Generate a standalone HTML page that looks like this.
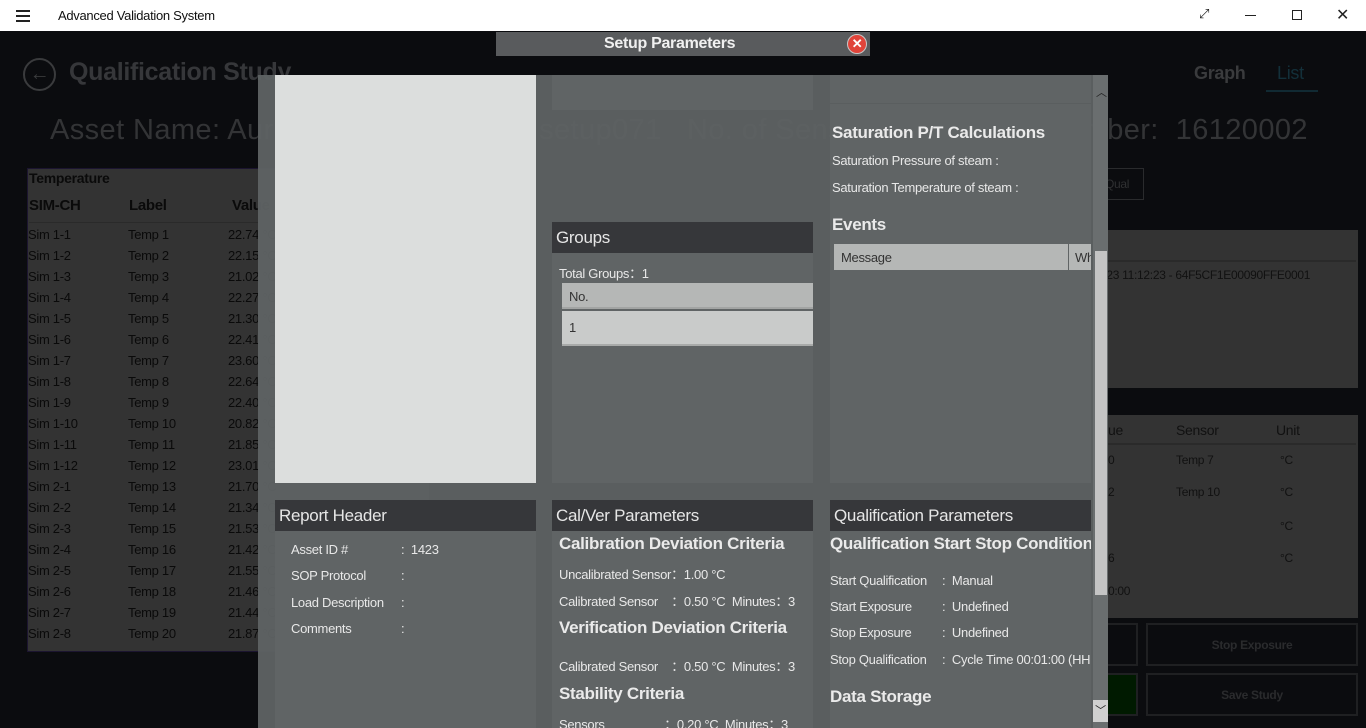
<!DOCTYPE html>
<html><head><meta charset="utf-8"><style>
*{margin:0;padding:0;box-sizing:border-box}
html,body{width:1366px;height:728px;overflow:hidden}
body{background:#0b0c0f;font-family:"Liberation Sans",sans-serif;position:relative;letter-spacing:-0.3px}
.a{position:absolute;white-space:nowrap}
.tb{left:0;top:0;width:1366px;height:31px;background:#fff}
.rowt{color:#0a0a0a;font-size:13px}
.hd{background:#36373a;color:#e6e6e6;font-size:17px;padding-left:4px;line-height:31px}
.pn{background:#606465}
.lt{color:#e8e8e8;font-size:13px}
.h2{color:#eaeaea;font-size:17px;font-weight:bold}
</style></head><body>
<div class="a tb"></div>
<div class="a" style="left:16px;top:10px;width:14px;height:2px;background:#222;box-shadow:0 5px 0 #222,0 10px 0 #222"></div>
<div class="a" style="left:58px;top:8px;font-size:13px;color:#111">Advanced Validation System</div>
<div class="a" style="left:1199px;top:6px;font-size:13px;color:#222">⤢</div>
<div class="a" style="left:1245px;top:15px;width:11px;height:1px;background:#222"></div>
<div class="a" style="left:1292px;top:10px;width:10px;height:10px;border:1px solid #222"></div>
<div class="a" style="left:1336px;top:5px;font-size:16px;color:#222">✕</div>

<!-- background page -->
<div class="a" style="left:23px;top:58px;width:33px;height:33px;border:2px solid #3a3b3d;border-radius:50%;color:#3a3b3d;font-size:20px;text-align:center;line-height:28px;font-weight:bold">←</div>
<div class="a" style="left:69px;top:58px;font-size:25px;font-weight:bold;color:#36373a">Qualification Study</div>
<div class="a" style="left:50px;top:114px;font-size:29px;letter-spacing:0.4px;color:#333436">Asset Name: Auro71 &nbsp; Setup Name : setup071 &nbsp; No. of Sensors: 20 &nbsp; Serial Number: &nbsp;16120002</div>
<div class="a" style="left:1194px;top:63px;font-size:18px;font-weight:bold;color:#3a3b3d">Graph</div>
<div class="a" style="left:1277px;top:63px;font-size:18px;color:#13303a">List</div>
<div class="a" style="left:1266px;top:90px;width:52px;height:2px;background:#112a33"></div>
<div class="a" style="left:1096px;top:168px;width:48px;height:32px;border:1px solid #2a2b2d;color:#2f3032;font-size:12px;padding:8px 0 0 8px">Qual</div>
<div class="a" style="left:1098px;top:230px;width:260px;height:158px;background:#333"></div>
<div class="a" style="left:1098px;top:260px;width:258px;height:2px;background:#2a2a2a"></div>
<div class="a" style="left:1100px;top:268px;font-size:12px;color:#111">023 11:12:23 - 64F5CF1E00090FFE0001</div>
<div class="a" style="left:1098px;top:415px;width:260px;height:203px;background:#333"></div>
<div class="a" style="left:1098px;top:443px;width:258px;height:2px;background:#2a2a2a"></div>
<div class="a" style="left:1108px;top:422px;font-size:14px;color:#111">ue</div>
<div class="a" style="left:1176px;top:422px;font-size:14px;color:#111">Sensor</div>
<div class="a" style="left:1276px;top:422px;font-size:14px;color:#111">Unit</div>
<div class="a" style="left:1108px;top:453px;font-size:12px;color:#111">0</div><div class="a" style="left:1176px;top:453px;font-size:12px;color:#111">Temp 7</div><div class="a" style="left:1280px;top:453px;font-size:12px;color:#111">°C</div>
<div class="a" style="left:1108px;top:485px;font-size:12px;color:#111">2</div><div class="a" style="left:1176px;top:485px;font-size:12px;color:#111">Temp 10</div><div class="a" style="left:1280px;top:485px;font-size:12px;color:#111">°C</div>
<div class="a" style="left:1280px;top:519px;font-size:12px;color:#111">°C</div>
<div class="a" style="left:1108px;top:551px;font-size:12px;color:#111">6</div><div class="a" style="left:1280px;top:551px;font-size:12px;color:#111">°C</div>
<div class="a" style="left:1108px;top:584px;font-size:12px;color:#111">0:00</div>
<div class="a" style="left:1098px;top:623px;width:40px;height:43px;border:2px solid #1f2022"></div>
<div class="a" style="left:1146px;top:623px;width:212px;height:43px;border:2px solid #1f2022;color:#2a2b2d;font-size:12px;font-weight:bold;text-align:center;line-height:40px">Stop Exposure</div>
<div class="a" style="left:1098px;top:673px;width:40px;height:43px;border:2px solid #1f2022;background:#001a00"></div>
<div class="a" style="left:1146px;top:673px;width:212px;height:43px;border:2px solid #1f2022;color:#2a2b2d;font-size:12px;font-weight:bold;text-align:center;line-height:40px">Save Study</div>

<!-- left table -->
<div class="a" style="left:27px;top:168px;width:402px;height:484px;background:#333;border-left:1px solid #1c1530;border-top:1px solid #1c1530;border-bottom:1px solid #1c1530"></div>
<div class="a rowt" style="left:29px;top:170px;font-weight:bold;font-size:14px">Temperature</div>
<div class="a rowt" style="left:29px;top:197px;font-weight:bold;font-size:15px">SIM-CH</div>
<div class="a rowt" style="left:129px;top:197px;font-weight:bold;font-size:15px">Label</div>
<div class="a rowt" style="left:232px;top:197px;font-weight:bold;font-size:15px">Value</div>
<div class="a" style="left:29px;top:222px;width:399px;height:1px;background:#2a2a2a"></div>
<div id="rows"></div>

<!-- modal -->
<div class="a" style="left:496px;top:32px;width:374px;height:24px;background:#595b5d"></div>
<div class="a" style="left:604px;top:35px;font-size:16px;font-weight:bold;color:#f0f0f0">Setup Parameters</div>
<div class="a" style="left:847px;top:34px;width:20px;height:20px;border-radius:50%;background:#e0443a;border:1px solid #c8c8c8;color:#fff;font-size:13px;text-align:center;line-height:18px;font-weight:bold">✕</div>
<div class="a" style="left:258px;top:75px;width:850px;height:653px;background:rgba(95,99,100,0.95)"></div>
<!-- col1 -->
<div class="a" style="left:275px;top:75px;width:261px;height:408px;background:#dcdedd"></div>
<div class="a hd" style="left:275px;top:500px;width:261px;height:31px">Report Header</div>
<div class="a pn" style="left:275px;top:531px;width:261px;height:197px"></div>
<div class="a lt" style="left:291px;top:542px">Asset ID #</div><div class="a lt" style="left:401px;top:542px">:&nbsp; 1423</div>
<div class="a lt" style="left:291px;top:568px">SOP Protocol</div><div class="a lt" style="left:401px;top:568px">:</div>
<div class="a lt" style="left:291px;top:595px">Load Description</div><div class="a lt" style="left:401px;top:595px">:</div>
<div class="a lt" style="left:291px;top:621px">Comments</div><div class="a lt" style="left:401px;top:621px">:</div>
<!-- col2 -->
<div class="a pn" style="left:552px;top:75px;width:261px;height:35px"></div>
<div class="a hd" style="left:552px;top:222px;width:261px;height:31px">Groups</div>
<div class="a pn" style="left:552px;top:253px;width:261px;height:230px"></div>
<div class="a lt" style="left:559px;top:263px">Total Groups：1</div>
<div class="a" style="left:562px;top:283px;width:251px;height:26px;background:#b5b7b6;border-bottom:2px solid #a2a4a3;color:#333;font-size:13px;padding:6px 7px">No.</div>
<div class="a" style="left:562px;top:311px;width:251px;height:35px;background:#c9cbca;border-bottom:2px solid #a8aaa9;color:#333;font-size:13px;padding:9px 7px">1</div>
<div class="a hd" style="left:552px;top:500px;width:261px;height:31px">Cal/Ver Parameters</div>
<div class="a pn" style="left:552px;top:531px;width:261px;height:197px"></div>
<div class="a h2" style="left:559px;top:534px">Calibration Deviation Criteria</div>
<div class="a lt" style="left:559px;top:564px">Uncalibrated Sensor：1.00 °C</div>
<div class="a lt" style="left:559px;top:591px">Calibrated Sensor &nbsp;&nbsp;&nbsp;：0.50 °C &nbsp;Minutes：3</div>
<div class="a h2" style="left:559px;top:618px">Verification Deviation Criteria</div>
<div class="a lt" style="left:559px;top:656px">Calibrated Sensor &nbsp;&nbsp;&nbsp;：0.50 °C &nbsp;Minutes：3</div>
<div class="a h2" style="left:559px;top:684px">Stability Criteria</div>
<div class="a lt" style="left:559px;top:714px">Sensors &nbsp;&nbsp;&nbsp;&nbsp;&nbsp;&nbsp;&nbsp;&nbsp;&nbsp;&nbsp;&nbsp;&nbsp;&nbsp;&nbsp;&nbsp;&nbsp;&nbsp;：0.20 °C &nbsp;Minutes：3</div>
<!-- col3 -->
<div class="a pn" style="left:830px;top:75px;width:261px;height:408px"></div>
<div class="a" style="left:830px;top:103px;width:261px;height:1px;background:#5a5e5f"></div>
<div class="a h2" style="left:832px;top:123px">Saturation P/T Calculations</div>
<div class="a lt" style="left:832px;top:153px">Saturation Pressure of steam :</div>
<div class="a lt" style="left:832px;top:180px">Saturation Temperature of steam :</div>
<div class="a h2" style="left:832px;top:215px">Events</div>
<div class="a" style="left:834px;top:244px;width:234px;height:26px;background:#b5b7b6;color:#333;font-size:13px;padding:6px 7px">Message</div>
<div class="a" style="left:1069px;top:244px;width:22px;height:26px;background:#b5b7b6;color:#333;font-size:13px;padding:6px 6px;overflow:hidden">Wh</div>
<div class="a hd" style="left:830px;top:500px;width:261px;height:31px">Qualification Parameters</div>
<div class="a pn" style="left:830px;top:531px;width:261px;height:197px"></div>
<div class="a h2" style="left:830px;top:534px;width:261px;overflow:hidden">Qualification Start Stop Condition</div>
<div class="a lt" style="left:830px;top:573px">Start Qualification</div><div class="a lt" style="left:942px;top:573px">:&nbsp; Manual</div>
<div class="a lt" style="left:830px;top:599px">Start Exposure</div><div class="a lt" style="left:942px;top:599px">:&nbsp; Undefined</div>
<div class="a lt" style="left:830px;top:625px">Stop Exposure</div><div class="a lt" style="left:942px;top:625px">:&nbsp; Undefined</div>
<div class="a lt" style="left:830px;top:652px">Stop Qualification</div><div class="a lt" style="left:942px;top:652px;width:149px;overflow:hidden">:&nbsp; Cycle Time 00:01:00 (HH</div>
<div class="a h2" style="left:830px;top:687px">Data Storage</div>
<!-- scrollbar -->
<div class="a" style="left:1093px;top:75px;width:15px;height:653px;background:#6a6e6f"></div>
<div class="a" style="left:1096px;top:84px;font-size:11px;color:#222">︿</div>
<div class="a" style="left:1095px;top:251px;width:12px;height:344px;background:#c4c4c4"></div>
<div class="a" style="left:1093px;top:700px;width:15px;height:22px;background:#d0d0d0;color:#222;font-size:11px;text-align:center;line-height:22px">﹀</div>
<script>
var v=["22.74","22.15","21.02","22.27","21.30","22.41","23.60","22.64","22.40","20.82","21.85","23.01","21.70","21.34","21.53","21.42","21.55","21.46","21.44","21.87"];
var s=["1-1","1-2","1-3","1-4","1-5","1-6","1-7","1-8","1-9","1-10","1-11","1-12","2-1","2-2","2-3","2-4","2-5","2-6","2-7","2-8"];
var h="";
for(var i=0;i<20;i++){var y=227+i*21;h+='<div class="a rowt" style="left:28px;top:'+y+'px">Sim '+s[i]+'</div><div class="a rowt" style="left:128px;top:'+y+'px">Temp '+(i+1)+'</div><div class="a rowt" style="left:228px;top:'+y+'px">'+v[i]+' °C</div>';}
document.getElementById("rows").outerHTML=h;
</script>
</body></html>
